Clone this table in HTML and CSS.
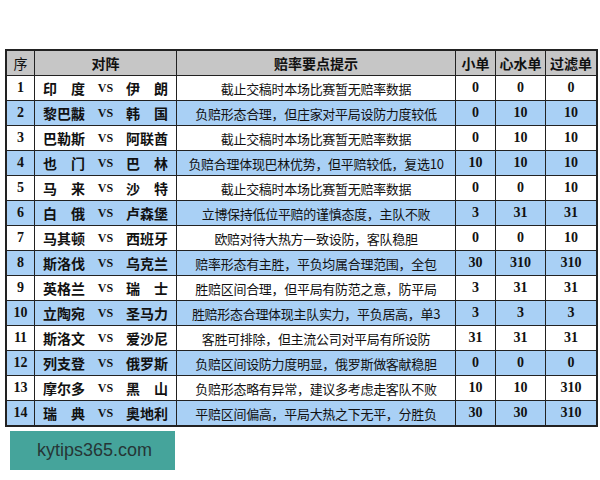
FILE: index.html
```html
<!DOCTYPE html>
<html lang="zh">
<head>
<meta charset="utf-8">
<link rel="stylesheet" href="styles.css">
</head>
<body>
<table class="odds">
<thead>
<tr><th class="c-no">序</th><th class="c-match">对阵</th><th class="c-tip">赔率要点提示</th><th class="c-a">小单</th><th class="c-b">心水单</th><th class="c-c">过滤单</th></tr>
</thead>
<tbody>
<tr><td class="num">1</td><td><div class="match"><span class="team">印度</span><span class="vs">VS</span><span class="team">伊朗</span></div></td><td class="tip">截止交稿时本场比赛暂无赔率数据</td><td class="num">0</td><td class="num">0</td><td class="num">0</td></tr>
<tr class="alt"><td class="num">2</td><td><div class="match"><span class="team">黎巴黻</span><span class="vs">VS</span><span class="team">韩国</span></div></td><td class="tip">负赔形态合理，但庄家对平局设防力度较低</td><td class="num">0</td><td class="num">10</td><td class="num">10</td></tr>
<tr><td class="num">3</td><td><div class="match"><span class="team">巴勒斯</span><span class="vs">VS</span><span class="team">阿联酋</span></div></td><td class="tip">截止交稿时本场比赛暂无赔率数据</td><td class="num">0</td><td class="num">10</td><td class="num">10</td></tr>
<tr class="alt"><td class="num">4</td><td><div class="match"><span class="team">也门</span><span class="vs">VS</span><span class="team">巴林</span></div></td><td class="tip">负赔合理体现巴林优势，但平赔较低，复选10</td><td class="num">10</td><td class="num">10</td><td class="num">10</td></tr>
<tr><td class="num">5</td><td><div class="match"><span class="team">马来</span><span class="vs">VS</span><span class="team">沙特</span></div></td><td class="tip">截止交稿时本场比赛暂无赔率数据</td><td class="num">0</td><td class="num">0</td><td class="num">10</td></tr>
<tr class="alt"><td class="num">6</td><td><div class="match"><span class="team">白俄</span><span class="vs">VS</span><span class="team">卢森堡</span></div></td><td class="tip">立博保持低位平赔的谨慎态度，主队不败</td><td class="num">3</td><td class="num">31</td><td class="num">31</td></tr>
<tr><td class="num">7</td><td><div class="match"><span class="team">马其顿</span><span class="vs">VS</span><span class="team">西班牙</span></div></td><td class="tip">欧赔对待大热方一致设防，客队稳胆</td><td class="num">0</td><td class="num">0</td><td class="num">10</td></tr>
<tr class="alt"><td class="num">8</td><td><div class="match"><span class="team">斯洛伐</span><span class="vs">VS</span><span class="team">乌克兰</span></div></td><td class="tip">赔率形态有主胜，平负均属合理范围，全包</td><td class="num">30</td><td class="num">310</td><td class="num">310</td></tr>
<tr><td class="num">9</td><td><div class="match"><span class="team">英格兰</span><span class="vs">VS</span><span class="team">瑞士</span></div></td><td class="tip">胜赔区间合理，但平局有防范之意，防平局</td><td class="num">3</td><td class="num">31</td><td class="num">31</td></tr>
<tr class="alt"><td class="num">10</td><td><div class="match"><span class="team">立陶宛</span><span class="vs">VS</span><span class="team">圣马力</span></div></td><td class="tip">胜赔形态合理体现主队实力，平负居高，单3</td><td class="num">3</td><td class="num">3</td><td class="num">3</td></tr>
<tr><td class="num">11</td><td><div class="match"><span class="team">斯洛文</span><span class="vs">VS</span><span class="team">爱沙尼</span></div></td><td class="tip">客胜可排除，但主流公司对平局有所设防</td><td class="num">31</td><td class="num">31</td><td class="num">31</td></tr>
<tr class="alt"><td class="num">12</td><td><div class="match"><span class="team">列支登</span><span class="vs">VS</span><span class="team">俄罗斯</span></div></td><td class="tip">负赔区间设防力度明显，俄罗斯做客献稳胆</td><td class="num">0</td><td class="num">0</td><td class="num">0</td></tr>
<tr><td class="num">13</td><td><div class="match"><span class="team">摩尔多</span><span class="vs">VS</span><span class="team">黑山</span></div></td><td class="tip">负赔形态略有异常，建议多考虑走客队不败</td><td class="num">10</td><td class="num">10</td><td class="num">310</td></tr>
<tr class="alt"><td class="num">14</td><td><div class="match"><span class="team">瑞典</span><span class="vs">VS</span><span class="team">奥地利</span></div></td><td class="tip">平赔区间偏高，平局大热之下无平，分胜负</td><td class="num">30</td><td class="num">30</td><td class="num">310</td></tr>
</tbody>
</table>
<div class="brand">kytips365.com</div>
</body>
</html>
```
FILE: styles.css
```css
html, body {
  margin: 0;
  padding: 0;
  background: #ffffff;
}
body {
  padding: 49px 5px 0 5px;
  font-family: "Noto Sans CJK SC", "Liberation Sans", sans-serif;
  color: #111;
}
.odds {
  border-collapse: collapse;
  width: 590px;
  table-layout: fixed;
  border: 2px solid #222;
}
.odds th, .odds td {
  border: 1px solid #222;
  height: 24px;
  padding: 0;
  text-align: center;
  vertical-align: middle;
  white-space: nowrap;
  overflow: hidden;
}
.odds th {
  background: #c6c6c6;
  font-size: 14px;
  font-weight: bold;
  line-height: 24px;
}
.odds th.c-no { width: 27px; font-weight: normal; }
.odds th.c-match { width: 141px; }
.odds th.c-tip { width: 278px; }
.odds th.c-a { width: 39px; }
.odds th.c-b { width: 49px; }
.odds th.c-c { width: 50px; }
.odds tr.alt td {
  background: #a9d0f5;
}
.num {
  font-family: "Liberation Serif", "DejaVu Serif", serif;
  font-weight: bold;
  font-size: 14px;
}
.tip {
  font-size: 13px;
  letter-spacing: -0.3px;
}
.match {
  display: flex;
  justify-content: space-between;
  align-items: center;
  padding: 0 8px 0 8px;
  font-size: 14px;
  font-weight: bold;
}
.team {
  display: inline-block;
  width: 42px;
  text-align: justify;
  text-align-last: justify;
}
.vs {
  font-family: "Liberation Serif", serif;
  font-size: 12px;
  font-weight: bold;
}
.brand {
  margin: 4px 0 0 5px;
  width: 165px;
  height: 39px;
  background: #45a49b;
  color: #263636;
  font-family: "Liberation Sans", Arial, sans-serif;
  font-size: 18px;
  line-height: 39px;
  padding-left: 27px;
  box-sizing: border-box;
}
```
